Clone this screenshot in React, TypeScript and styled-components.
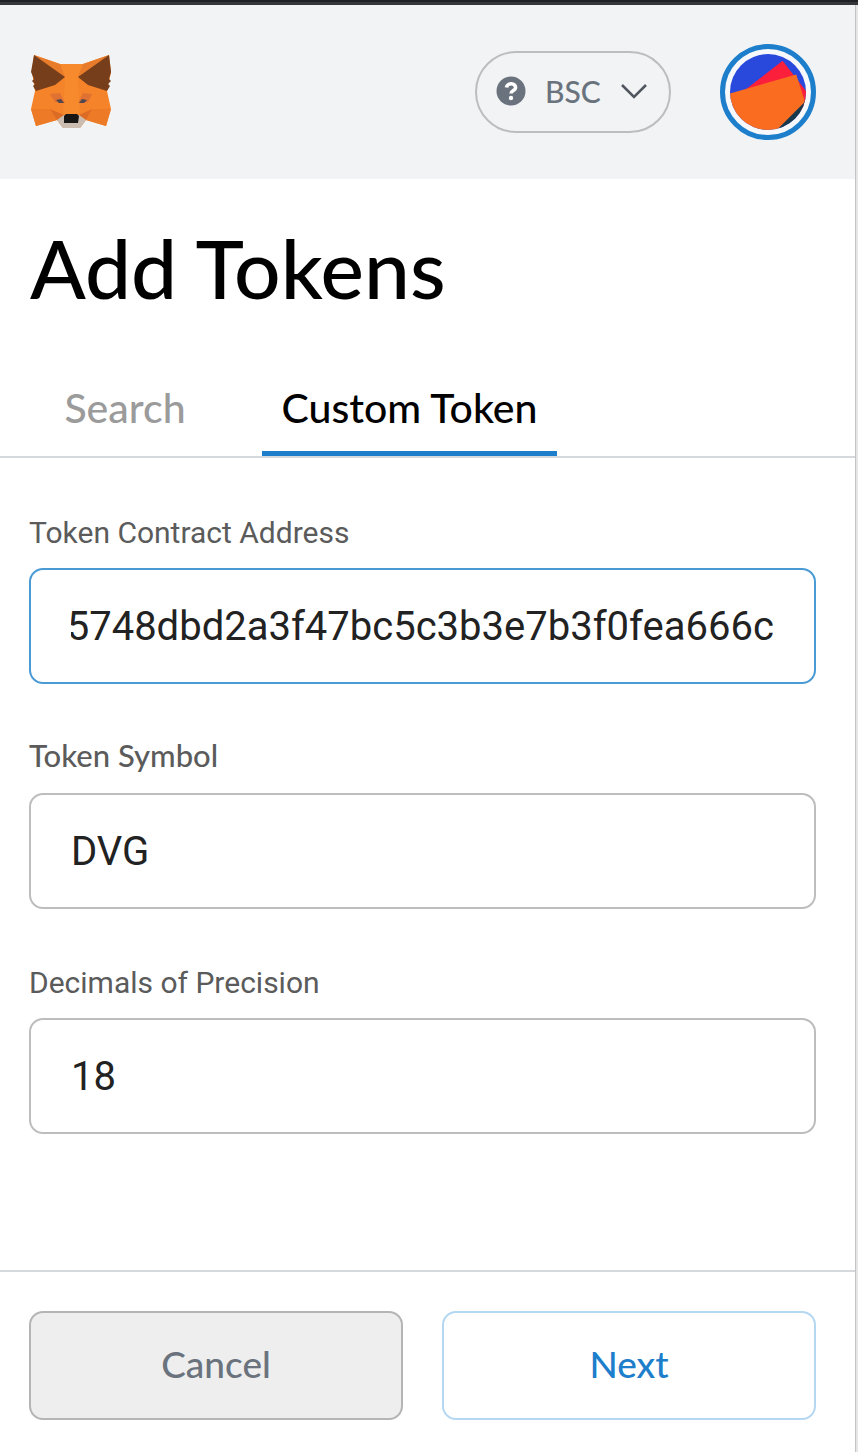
import React, { useLayoutEffect, useRef, useState } from 'react';
import styled, { createGlobalStyle } from 'styled-components';

const GlobalStyle = createGlobalStyle`
  * { box-sizing: border-box; }
  body { margin: 0; background: #fff; }
`;

const display = `'Lato', 'Liberation Sans', sans-serif`;
const body = `'Roboto', 'Liberation Sans', sans-serif`;

const Window = styled.div`
  display: flex;
  flex-direction: column;
  min-height: 100vh;
`;

const BrowserEdge = styled.div`
  height: 5px;
  background: #202124;
  border-bottom: 3px solid #35363a;
`;

const Popup = styled.main`
  flex: 1;
  display: flex;
  flex-direction: column;
  margin-right: 2px;
  border-right: 1px solid #c4c4c4;
  box-shadow: 2px 0 0 #e6e6e6;
  font-family: ${body};
`;

const Header = styled.header`
  display: flex;
  align-items: center;
  height: 174px;
  padding: 0 39px 0 30px;
  background: #f2f3f5;
`;

const LogoLink = styled.a`
  display: block;
  width: 82px;
  height: 76px;
  margin-right: auto;
`;

const NetworkButton = styled.button`
  display: flex;
  align-items: center;
  gap: 19px;
  width: 196px;
  height: 82px;
  margin-right: 49px;
  padding: 0 19px 2px;
  border: 2px solid #bbbec1;
  border-radius: 41px;
  background: transparent;
  color: #6a737d;
  font: 500 30px/40px ${display};
`;

const AccountButton = styled.button`
  width: 96px;
  height: 96px;
  padding: 5px;
  border: 5px solid #1d7ecb;
  border-radius: 50%;
  background: #f6f8fb;
  svg { display: block; width: 100%; height: 100%; }
`;

const Title = styled.h1`
  margin: 0;
  padding: 44px 30px 0;
  color: #000;
  font: 500 82px/88px ${display};
`;

const Tabs = styled.nav`
  display: flex;
  margin-top: 47px;
  border-bottom: 2px solid #d6d9dc;
`;

const Tab = styled.button<{ $active?: boolean }>`
  height: 98px;
  width: ${p => (p.$active ? 295 : 250)}px;
  margin-right: ${p => (p.$active ? 0 : 12)}px;
  padding: 6px 0 0;
  border: 0;
  border-bottom: 5px solid ${p => (p.$active ? '#1d7ecb' : 'transparent')};
  background: transparent;
  color: ${p => (p.$active ? '#000' : '#9b9b9b')};
  font: 500 41px/48px ${display};
`;

const Form = styled.form`
  flex: 1;
  display: flex;
  flex-direction: column;
`;

const Fields = styled.div`
  display: flex;
  flex-direction: column;
  gap: 56px;
  padding: 57px 39px 136px 29px;
`;

const Field = styled.div`
  display: flex;
  flex-direction: column;
  gap: 17px;
`;

const Label = styled.label`
  color: #5b5b5b;
  font: 400 30px/36px ${body};
`;

const RoundedLabel = styled(Label)`
  padding-bottom: 6px;
  font: 500 31px/30px ${display};
`;

const Input = styled.input<{ $active?: boolean }>`
  width: 100%;
  height: 116px;
  padding: 0 40px;
  border: 2px solid ${p => (p.$active ? '#4a9ad4' : '#bdbdbd')};
  border-radius: 14px;
  outline: none;
  background: #fff;
  color: #222;
  font: 400 40px/48px ${body};
`;

const Footer = styled.footer`
  flex: 1;
  display: flex;
  align-items: flex-start;
  gap: 39px;
  padding: 39px 39px 32px 29px;
  border-top: 2px solid #d6d9dc;
`;

const Action = styled.button<{ $primary?: boolean }>`
  flex: 1;
  height: 109px;
  padding: 0 0 4px;
  border: 2px solid ${p => (p.$primary ? '#b5d8f2' : '#b5b5b5')};
  border-radius: 14px;
  background: ${p => (p.$primary ? '#fff' : '#eee')};
  color: ${p => (p.$primary ? '#1d7ecb' : '#6a737d')};
  font: 500 37px/44px ${display};
`;

const Fox = () => (
  <svg viewBox="0 0 82 76" width="82" height="76" aria-hidden="true">
    <path d="M4 1 30 10H53L79 1 81 18 77 37 81 55 76 72 56 66 50 74H33L27 66 6 72 1 55 5 37 2 18Z" fill="#f5832a" />
    <path d="M30 10H53L48 23 50 60H33L35 23Z" fill="#f68a2c" />
    <path d="M4 1 30 10 35 23ZM79 1 53 10 48 23Z" fill="#e87c2b" />
    <path d="M4 1 35 23 25 31 6 37 3 32 5 30 2 27 4 25 1 18ZM79 1 48 23 58 31 77 37 80 32 78 30 81 27 79 25 81 18Z" fill="#763e1a" />
    <path d="M1 55H20L27 66 6 72ZM81 55H62L56 66 76 72Z" fill="#ec7a27" />
    <path d="M20 55 34 61 27 66ZM62 55 49 61 56 66Z" fill="#dc6c25" />
    <path d="M20 40 30 39 35 49 25 48ZM62 40 53 39 48 49 58 48Z" fill="#df7132" />
    <path d="M26 46 31 45 34 49 29 49ZM57 46 52 45 49 49 54 49Z" fill="#514750" />
    <path d="M27 66 34 61H49L56 66 50 74H33Z" fill="#cabcb0" />
    <path d="M34 62 36 60H47L49 62 48 69H34Z" fill="#191716" />
  </svg>
);

const QuestionMark = () => (
  <svg width="30" height="30" viewBox="0 0 30 30" aria-hidden="true">
    <circle cx="15" cy="15" r="14.5" fill="#6a737d" />
    <path d="M10.500 11.500C11 6.500 20 6.500 19.500 12C19.300 14.500 15 14.500 15 17.500" fill="none" stroke="#fff" strokeWidth="3.600" />
    <circle cx="15" cy="22" r="2.200" fill="#fff" />
  </svg>
);

const Chevron = () => (
  <svg width="28" height="18" viewBox="0 0 28 18" aria-hidden="true">
    <path d="M2 3 14 15 26 3" fill="none" stroke="#4f565e" strokeWidth="2.500" />
  </svg>
);

const Avatar = () => (
  <svg viewBox="0 0 78 78" aria-hidden="true">
    <defs><clipPath id="disc"><circle cx="39" cy="39" r="39" /></clipPath></defs>
    <g clipPath="url(#disc)">
      <path d="M0 0H78V78H0Z" fill="#2849dc" />
      <path d="M14 38 54 7 78 38V60Z" fill="#fc1f3c" />
      <path d="M78 46 48 78H78Z" fill="#17394a" />
      <path d="M-2 41 68 21 77 49 46 80H-2Z" fill="#fa6c20" />
    </g>
  </svg>
);

export default function App() {
  const address = useRef<HTMLInputElement>(null);
  const [tab, setTab] = useState('custom');

  // A long address shows its last characters.
  useLayoutEffect(() => {
    const showEnd = () => {
      if (address.current) address.current.scrollLeft = address.current.scrollWidth;
    };
    showEnd();
    document.fonts.ready.then(showEnd);
  }, []);

  return (
    <Window>
      <GlobalStyle />
      <BrowserEdge />
      <Popup>
        <Header>
          <LogoLink href="#" aria-label="Home"><Fox /></LogoLink>
          <NetworkButton type="button"><QuestionMark />BSC<Chevron /></NetworkButton>
          <AccountButton type="button" aria-label="Account"><Avatar /></AccountButton>
        </Header>
        <Title>Add Tokens</Title>
        <Tabs>
          <Tab type="button" $active={tab === 'search'} onClick={() => setTab('search')}>Search</Tab>
          <Tab type="button" $active={tab === 'custom'} onClick={() => setTab('custom')}>Custom Token</Tab>
        </Tabs>
        <Form onSubmit={e => e.preventDefault()}>
          <Fields>
            <Field>
              <Label htmlFor="address">Token Contract Address</Label>
              <Input id="address" ref={address} $active defaultValue="0x51e00a95748dbd2a3f47bc5c3b3e7b3f0fea666c" />
            </Field>
            <Field>
              <RoundedLabel htmlFor="symbol">Token Symbol</RoundedLabel>
              <Input id="symbol" defaultValue="DVG" />
            </Field>
            <Field>
              <Label htmlFor="decimals">Decimals of Precision</Label>
              <Input id="decimals" inputMode="numeric" defaultValue="18" />
            </Field>
          </Fields>
          <Footer>
            <Action type="button">Cancel</Action>
            <Action type="submit" $primary>Next</Action>
          </Footer>
        </Form>
      </Popup>
    </Window>
  );
}
